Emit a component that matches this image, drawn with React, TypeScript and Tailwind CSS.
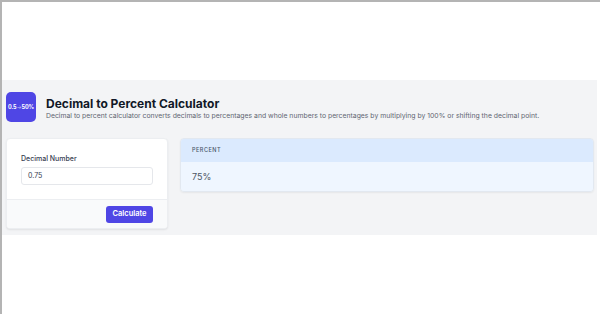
import React from "react";

export default function App() {
  return (
    <div
      className="w-[600px] h-[314px] bg-white border-l-2 border-t-2 border-[#b4b4b4] overflow-hidden flex flex-col"
      style={{ fontFamily: "Inter, 'Noto Sans', sans-serif" }}
    >
      <div className="h-[78px]" />
      <div className="mr-[3px] bg-[#f3f4f6] h-[155px] pl-[4px] pr-[3px] pt-[12px]">
        <div className="flex items-start gap-[10px]">
          <div className="w-[30px] h-[30px] rounded-[5px] bg-[#4f46e5] flex items-center justify-center text-white text-[5.5px] font-bold tracking-tight">
            0.5<span className="text-[#c7c4f5] font-normal">→</span>50%
          </div>
          <div className="flex flex-col pt-[5px]">
            <div className="text-[12px] font-bold text-[#111827] leading-[14px]">
              Decimal to Percent Calculator
            </div>
            <div className="text-[6.85px] text-[#5f6672] leading-[10px]">
              Decimal to percent calculator converts decimals to percentages and whole numbers to percentages by multiplying by 100% or shifting the decimal point.
            </div>
          </div>
        </div>
        <div className="flex gap-[12px] mt-[16px]">
          <div className="w-[162px] bg-white rounded-[4px] shadow-[0_1px_2px_rgba(0,0,0,0.08)] border border-[#eceef1] overflow-hidden">
            <div className="px-[14px] pt-[15px] pb-[14px]">
              <div className="text-[7px] text-[#374151] font-medium leading-[10px] mb-[3px]">
                Decimal Number
              </div>
              <div className="h-[18px] border border-[#e5e7eb] rounded-[3px] flex items-center px-[6px] text-[7px] text-[#374151]">
                0.75
              </div>
            </div>
            <div className="bg-[#f9fafb] border-t border-[#eceef1] h-[29px] flex items-center justify-end px-[14px]">
              <div className="w-[47px] h-[17px] rounded-[3px] bg-[#4f46e5] text-white text-[7.5px] font-semibold flex items-center justify-center">
                Calculate
              </div>
            </div>
          </div>
          <div className="flex-1 self-start rounded-[4px] overflow-hidden border border-[#e2e8f0] shadow-[0_1px_2px_rgba(0,0,0,0.06)]">
            <div className="h-[23px] bg-[#dbeafe] flex items-center px-[11px] text-[5.5px] tracking-[0.5px] text-[#475569] font-medium">
              PERCENT
            </div>
            <div className="h-[29px] bg-[#eff6ff] flex items-center px-[11px] text-[9px] text-[#4b5563]">
              75%
            </div>
          </div>
        </div>
      </div>
    </div>
  );
}
